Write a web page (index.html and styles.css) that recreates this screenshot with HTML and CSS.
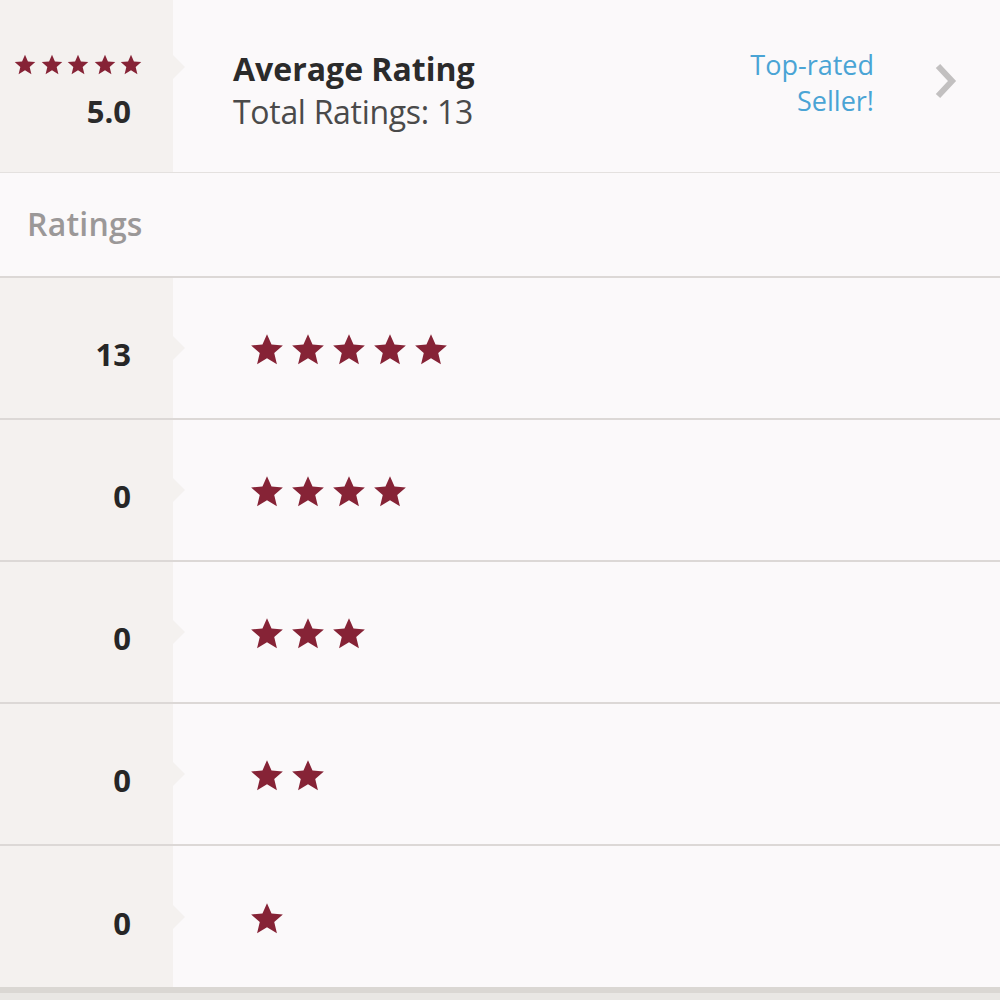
FILE: index.html
```html
<!DOCTYPE html>
<html>
<head>
<meta charset="utf-8">
<link rel="stylesheet" href="styles.css">
</head>
<body>
<svg width="0" height="0" class="defs">
  <defs>
    <symbol id="star" viewBox="0 0 24 24">
      <polygon points="12,0.8 15.2,8.1 23.2,8.8 17.1,14.1 19,22 12,17.8 5,22 6.9,14.1 0.8,8.8 8.8,8.1"/>
    </symbol>
  </defs>
</svg>
<div class="page">
  <div class="header">
    <div class="side side-head">
      <div class="mini-stars">
        <svg class="mstar"><use href="#star"/></svg>
        <svg class="mstar"><use href="#star"/></svg>
        <svg class="mstar"><use href="#star"/></svg>
        <svg class="mstar"><use href="#star"/></svg>
        <svg class="mstar"><use href="#star"/></svg>
      </div>
      <div class="avg">5.0</div>
    </div>
    <div class="head-main">
      <div class="head-text">
        <div class="title">Average Rating</div>
        <div class="sub">Total Ratings: 13</div>
      </div>
      <div class="top-rated">Top-rated<br>Seller!</div>
      <svg class="chev" viewBox="0 0 24 36"><polyline points="4,3 18,18 4,33"/></svg>
    </div>
  </div>
  <div class="section">Ratings</div>
  <div class="row">
    <div class="side"><span class="num">13</span></div>
    <div class="stars">
      <svg class="star"><use href="#star"/></svg>
      <svg class="star"><use href="#star"/></svg>
      <svg class="star"><use href="#star"/></svg>
      <svg class="star"><use href="#star"/></svg>
      <svg class="star"><use href="#star"/></svg>
    </div>
  </div>
  <div class="row">
    <div class="side"><span class="num">0</span></div>
    <div class="stars">
      <svg class="star"><use href="#star"/></svg>
      <svg class="star"><use href="#star"/></svg>
      <svg class="star"><use href="#star"/></svg>
      <svg class="star"><use href="#star"/></svg>
    </div>
  </div>
  <div class="row">
    <div class="side"><span class="num">0</span></div>
    <div class="stars">
      <svg class="star"><use href="#star"/></svg>
      <svg class="star"><use href="#star"/></svg>
      <svg class="star"><use href="#star"/></svg>
    </div>
  </div>
  <div class="row">
    <div class="side"><span class="num">0</span></div>
    <div class="stars">
      <svg class="star"><use href="#star"/></svg>
      <svg class="star"><use href="#star"/></svg>
    </div>
  </div>
  <div class="row last">
    <div class="side"><span class="num">0</span></div>
    <div class="stars">
      <svg class="star"><use href="#star"/></svg>
    </div>
  </div>
</div>
</body>
</html>
```
FILE: styles.css
```css
html, body {
  margin: 0;
  padding: 0;
}
body {
  background: #e9e7e4;
  font-family: "Open Sans", Lato, sans-serif;
  height: 1000px;
  overflow: hidden;
}
.defs {
  position: absolute;
}
.page {
  background: #fbf9fa;
}
.header {
  display: flex;
  height: 172px;
  border-bottom: 1px solid #e4e1df;
}
.side {
  width: 173px;
  flex: none;
  background: #f4f1ef;
  position: relative;
  display: flex;
  align-items: center;
  justify-content: flex-end;
  padding-right: 42px;
  box-sizing: border-box;
}
.side::after {
  content: "";
  position: absolute;
  right: -12px;
  top: 50%;
  margin-top: -12px;
  border-top: 12px solid transparent;
  border-bottom: 12px solid transparent;
  border-left: 12px solid #f4f1ef;
}
.side-head {
  flex-direction: column;
  align-items: flex-end;
  justify-content: flex-start;
  padding-top: 54px;
  padding-right: 31px;
}
.side-head::after {
  top: 67px;
}
.mini-stars {
  display: flex;
  gap: 4.5px;
}
.mstar {
  width: 22px;
  height: 22px;
  fill: #862336;
}
.avg {
  font-weight: 700;
  font-size: 31px;
  color: #2a2a2a;
  margin-top: 15px;
  padding-right: 11px;
  line-height: 40px;
}
.head-main {
  flex: 1;
  display: flex;
  align-items: center;
  padding-left: 60px;
  padding-right: 42px;
  padding-bottom: 2px;
}
.head-text {
  flex: 1;
  padding-top: 12px;
}
.title {
  font-weight: 700;
  font-size: 32px;
  color: #2b2b2b;
  line-height: 42px;
}
.sub {
  font-size: 32px;
  color: #4a4a4a;
  line-height: 44px;
  letter-spacing: -0.3px;
}
.top-rated {
  text-align: right;
  color: #4aa4d5;
  font-size: 27px;
  line-height: 36px;
  margin-bottom: 4px;
}
.chev {
  width: 24px;
  height: 36px;
  margin-left: 60px;
  margin-bottom: 8px;
  fill: none;
  stroke: #c2c0c0;
  stroke-width: 6;
}
.section {
  display: flex;
  align-items: center;
  padding-left: 27px;
  font-size: 32px;
  font-weight: 600;
  color: #9b9898;
  padding-bottom: 2px;
  box-sizing: border-box;
  height: 105px;
  border-bottom: 2px solid #dcd8d6;
  letter-spacing: 0.2px;
}
.row {
  display: flex;
  height: 142px;
  border-bottom: 2px solid #dcd8d6;
  box-sizing: border-box;
}
.row.last {
  border-bottom: 6px solid #dad7d3;
  height: 147px;
}
.num {
  font-weight: 700;
  font-size: 31px;
  color: #262626;
  margin-top: 12px;
}
.stars {
  display: flex;
  align-items: center;
  gap: 7px;
  padding-left: 77px;
  padding-top: 4px;
}
.star {
  width: 34px;
  height: 34px;
  fill: #862336;
}
```
